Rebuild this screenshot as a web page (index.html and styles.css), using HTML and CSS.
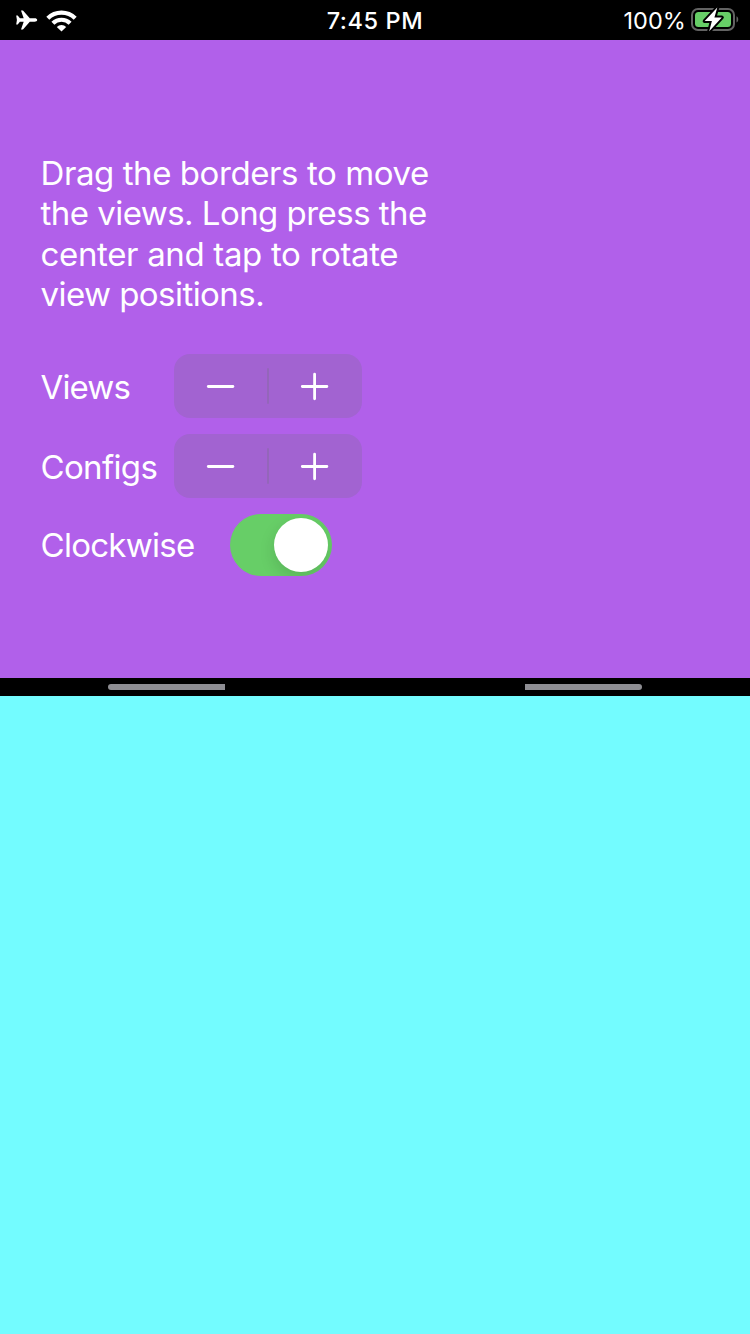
FILE: index.html
```html
<!DOCTYPE html>
<html lang="en">
<head>
<meta charset="utf-8">
<title>Views</title>
<link rel="stylesheet" href="styles.css">
</head>
<body>
<header class="status">
  <div class="status-left">
    <svg class="plane" width="22" height="20" viewBox="0 0 22 20"><path d="M21.200 10c0-1.100-1.200-1.700-2.600-1.700h-4.800L7.200.8C7 .5 6.800.4 6.400.4H5l2.700 7.900H3.900L1.700 5.600H.2L.9 10 .2 14.400h1.500l2.200-2.700h3.800L5 19.600h1.400c.4 0 .6-.1.8-.4l6.600-7.500h4.800c1.400 0 2.600-.6 2.600-1.700z"/></svg>
    <svg class="wifi" width="31" height="22" viewBox="0 0 31 22"><path class="arc" d="M1.800 8.200a19.400 19.400 0 0 1 27.400 0M6.900 13.300a12.200 12.200 0 0 1 17.200 0"/><path d="M15.500 21.600l-4.700-4.700a6.600 6.600 0 0 1 9.400 0z"/></svg>
  </div>
  <div class="time">7:45 PM</div>
  <div class="status-right">
    <span class="percent">100%</span>
    <svg class="battery" width="48" height="26" viewBox="0 0 48 26"><rect class="shell" x="1" y="3" width="42" height="21" rx="6"/><rect class="charge" x="4" y="6" width="36" height="15" rx="3.500"/><path class="nub" d="M45.500 10.300c2.300.8 2.300 5.500 0 6.300z"/><path class="bolt" d="M26.300 1.600L13.700 15.100h7.200l-2.700 10.100 12.600-13.700h-7.400z"/></svg>
  </div>
</header>
<main class="pane pane-controls">
  <p class="hint"><span class="line l1">Drag the borders to move</span><span class="line l2">the views. Long press the</span><span class="line l3">center and tap to rotate</span><span class="line l4">view positions.</span></p>
  <div class="row">
    <span class="label views">Views</span>
    <div class="stepper">
      <svg width="94" height="64" viewBox="0 0 94 64"><path d="M34.300 32.500h24.600"/></svg>
      <i class="split"></i>
      <svg width="94" height="64" viewBox="0 0 94 64"><path d="M34.300 32.500h24.600M46.600 20.200v24.600"/></svg>
    </div>
  </div>
  <div class="row">
    <span class="label configs">Configs</span>
    <div class="stepper">
      <svg width="94" height="64" viewBox="0 0 94 64"><path d="M34.300 32.500h24.600"/></svg>
      <i class="split"></i>
      <svg width="94" height="64" viewBox="0 0 94 64"><path d="M34.300 32.500h24.600M46.600 20.200v24.600"/></svg>
    </div>
  </div>
  <div class="row row-switch">
    <span class="label clockwise">Clockwise</span>
    <div class="switch"><i class="knob"></i></div>
  </div>
</main>
<div class="divider"><i class="grip grip-left"></i><i class="grip grip-right"></i></div>
<section class="pane pane-empty"></section>
</body>
</html>
```

FILE: styles.css
```css
* { box-sizing: border-box; }
body {
  margin: 0;
  width: 750px;
  height: 1334px;
  display: flex;
  flex-direction: column;
  overflow: hidden;
  background: #000;
  color: #fff;
  font-family: Inter, "Liberation Sans", sans-serif;
}
svg { display: block; fill: #fff; }

.status {
  height: 40px;
  display: grid;
  grid-template-columns: 1fr auto 1fr;
  line-height: 40px;
  font-size: 24px;
}
.status-left { display: flex; align-items: flex-start; padding: 10px 0 0 16px; gap: 8px; }
.wifi .arc { fill: none; stroke: #fff; stroke-width: 4.2; }
.wifi { margin-top: -0.5px; }
.time { font-size: 23.5px; font-weight: 500; letter-spacing: 0.6px; padding-top: 1px; }
.status-right { display: flex; justify-content: flex-end; padding-right: 12px; gap: 5px; }
.percent { font-size: 23.5px; letter-spacing: 0.05px; padding-top: 1px; white-space: nowrap; }
.battery { margin: 6px -1px 0 0; overflow: visible; }
.battery .shell { fill: none; stroke: #636363; stroke-width: 2; }
.battery .nub { fill: #636363; }
.battery .charge { fill: #67ce67; }
.battery .bolt { stroke: #000; stroke-width: 4; paint-order: stroke; stroke-linejoin: round; }

.pane-controls { height: 638px; background: #b160ea; padding: 112.6px 40px 0; }
.hint { margin: 0 0 39.4px; padding-left: 0.5px; font-size: 33px; line-height: 40.5px; }
.line { display: block; white-space: nowrap; }
.l1 { letter-spacing: -0.42px; }
.l2 { letter-spacing: -0.54px; }
.l3 { letter-spacing: -0.34px; }
.l4 { letter-spacing: -0.55px; }
.row { display: flex; align-items: center; height: 64px; margin-bottom: 16px; }
.row-switch { height: 62px; }
.label { font-size: 33px; line-height: 40px; white-space: nowrap; width: 134px; padding: 2px 0 0 0.5px; }
.views { letter-spacing: -0.85px; }
.configs { letter-spacing: -0.65px; }
.clockwise { width: 190px; padding-top: 0; letter-spacing: -0.72px; }
.stepper {
  width: 188px;
  height: 64px;
  display: flex;
  align-items: center;
  border-radius: 16px;
  background: #a263d1;
}
.stepper svg { fill: none; stroke: #fff; stroke-width: 2.8; stroke-linecap: round; }
.split { width: 2px; height: 36px; margin: 0 -1px; border-radius: 1px; background: #9466ba; }
.switch {
  width: 102px;
  height: 62px;
  padding: 4px;
  display: flex;
  justify-content: flex-end;
  border-radius: 31px;
  background: #67ce67;
  overflow: hidden;
}
.knob { width: 54px; height: 54px; border-radius: 50%; background: #fff; box-shadow: 0 6px 16px rgba(0, 0, 0, 0.13); }

.divider { height: 18px; display: flex; justify-content: space-between; align-items: center; padding: 0 108px; }
.grip { width: 117px; height: 6px; background: #8e8e93; }
.grip-left { border-radius: 3px 0 0 3px; }
.grip-right { border-radius: 0 3px 3px 0; }
.pane-empty { flex: 1; background: #73fcff; }
```
